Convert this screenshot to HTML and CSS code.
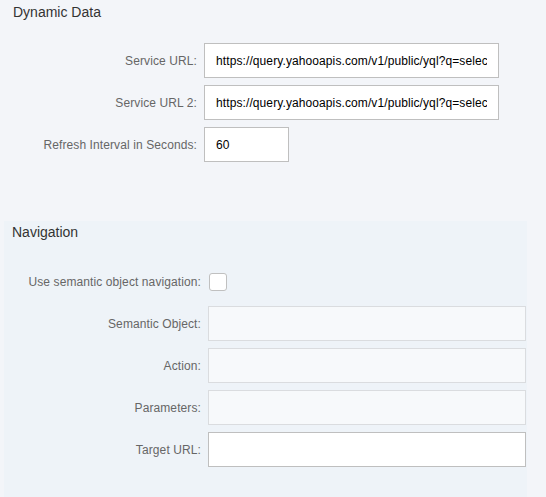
FILE: index.html
```html
<!DOCTYPE html>
<html>
<head>
<meta charset="utf-8">
<link rel="stylesheet" href="styles.css">
</head>
<body>
<section class="sec sec-dynamic">
  <h2 class="sec-title">Dynamic Data</h2>
  <div class="form form-dynamic">
    <label class="lbl">Service URL:</label>
    <input class="inp" type="text" value="https://query.yahooapis.com/v1/public/yql?q=select * from yahoo.finance.quotes">
    <label class="lbl">Service URL 2:</label>
    <input class="inp" type="text" value="https://query.yahooapis.com/v1/public/yql?q=select * from yahoo.finance.quotes">
    <label class="lbl">Refresh Interval in Seconds:</label>
    <input class="inp inp-short" type="text" value="60">
  </div>
</section>
<section class="sec sec-nav">
  <h2 class="sec-title nav-title">Navigation</h2>
  <div class="form form-nav">
    <label class="lbl">Use semantic object navigation:</label>
    <span class="chk"></span>
    <label class="lbl">Semantic Object:</label>
    <input class="inp inp-disabled" type="text" disabled>
    <label class="lbl">Action:</label>
    <input class="inp inp-disabled" type="text" disabled>
    <label class="lbl">Parameters:</label>
    <input class="inp inp-disabled" type="text" disabled>
    <label class="lbl">Target URL:</label>
    <input class="inp" type="text">
  </div>
</section>
</body>
</html>
```
FILE: styles.css
```css
html, body {
  margin: 0;
  padding: 0;
}
body {
  background: #f3f5f9;
  font-family: "Liberation Sans", Arial, sans-serif;
  width: 546px;
  height: 497px;
  overflow: hidden;
}
.sec-title {
  margin: 0;
  font-size: 14px;
  line-height: 20px;
  font-weight: normal;
  color: #333333;
}
.sec-dynamic {
  padding-top: 2px;
}
.sec-dynamic .sec-title {
  padding-left: 13px;
}
.form {
  display: grid;
  column-gap: 7px;
  row-gap: 7px;
  align-items: center;
  grid-auto-rows: 35px;
}
.form-dynamic {
  margin-top: 21px;
  grid-template-columns: 197px 295px;
}
.lbl {
  font-size: 12px;
  letter-spacing: 0.1px;
  color: #666666;
  text-align: right;
  white-space: nowrap;
}
.inp {
  box-sizing: border-box;
  height: 35px;
  width: 100%;
  margin: 0;
  border: 1px solid #bfbfbf;
  border-radius: 0;
  background: #ffffff;
  padding: 0 11px;
  font-family: "Liberation Sans", Arial, sans-serif;
  font-size: 12px;
  letter-spacing: 0.1px;
  color: #000000;
  outline: none;
}
.inp-short {
  width: 85px;
}
.inp-disabled {
  background: #f7f9fb;
  border-color: #dadcdf;
}
.sec-nav {
  margin-top: 59px;
  margin-left: 4px;
  width: 523px;
  height: 276px;
  background: #eef3f8;
  padding-top: 1px;
  box-sizing: border-box;
}
.nav-title {
  padding-left: 8px;
}
.form-nav {
  margin-top: 22px;
  grid-template-columns: 197px 318px;
}
.chk {
  box-sizing: border-box;
  width: 18px;
  height: 18px;
  margin-left: 1px;
  border: 1px solid #c0c0c0;
  border-radius: 3px;
  background: #ffffff;
}
```
